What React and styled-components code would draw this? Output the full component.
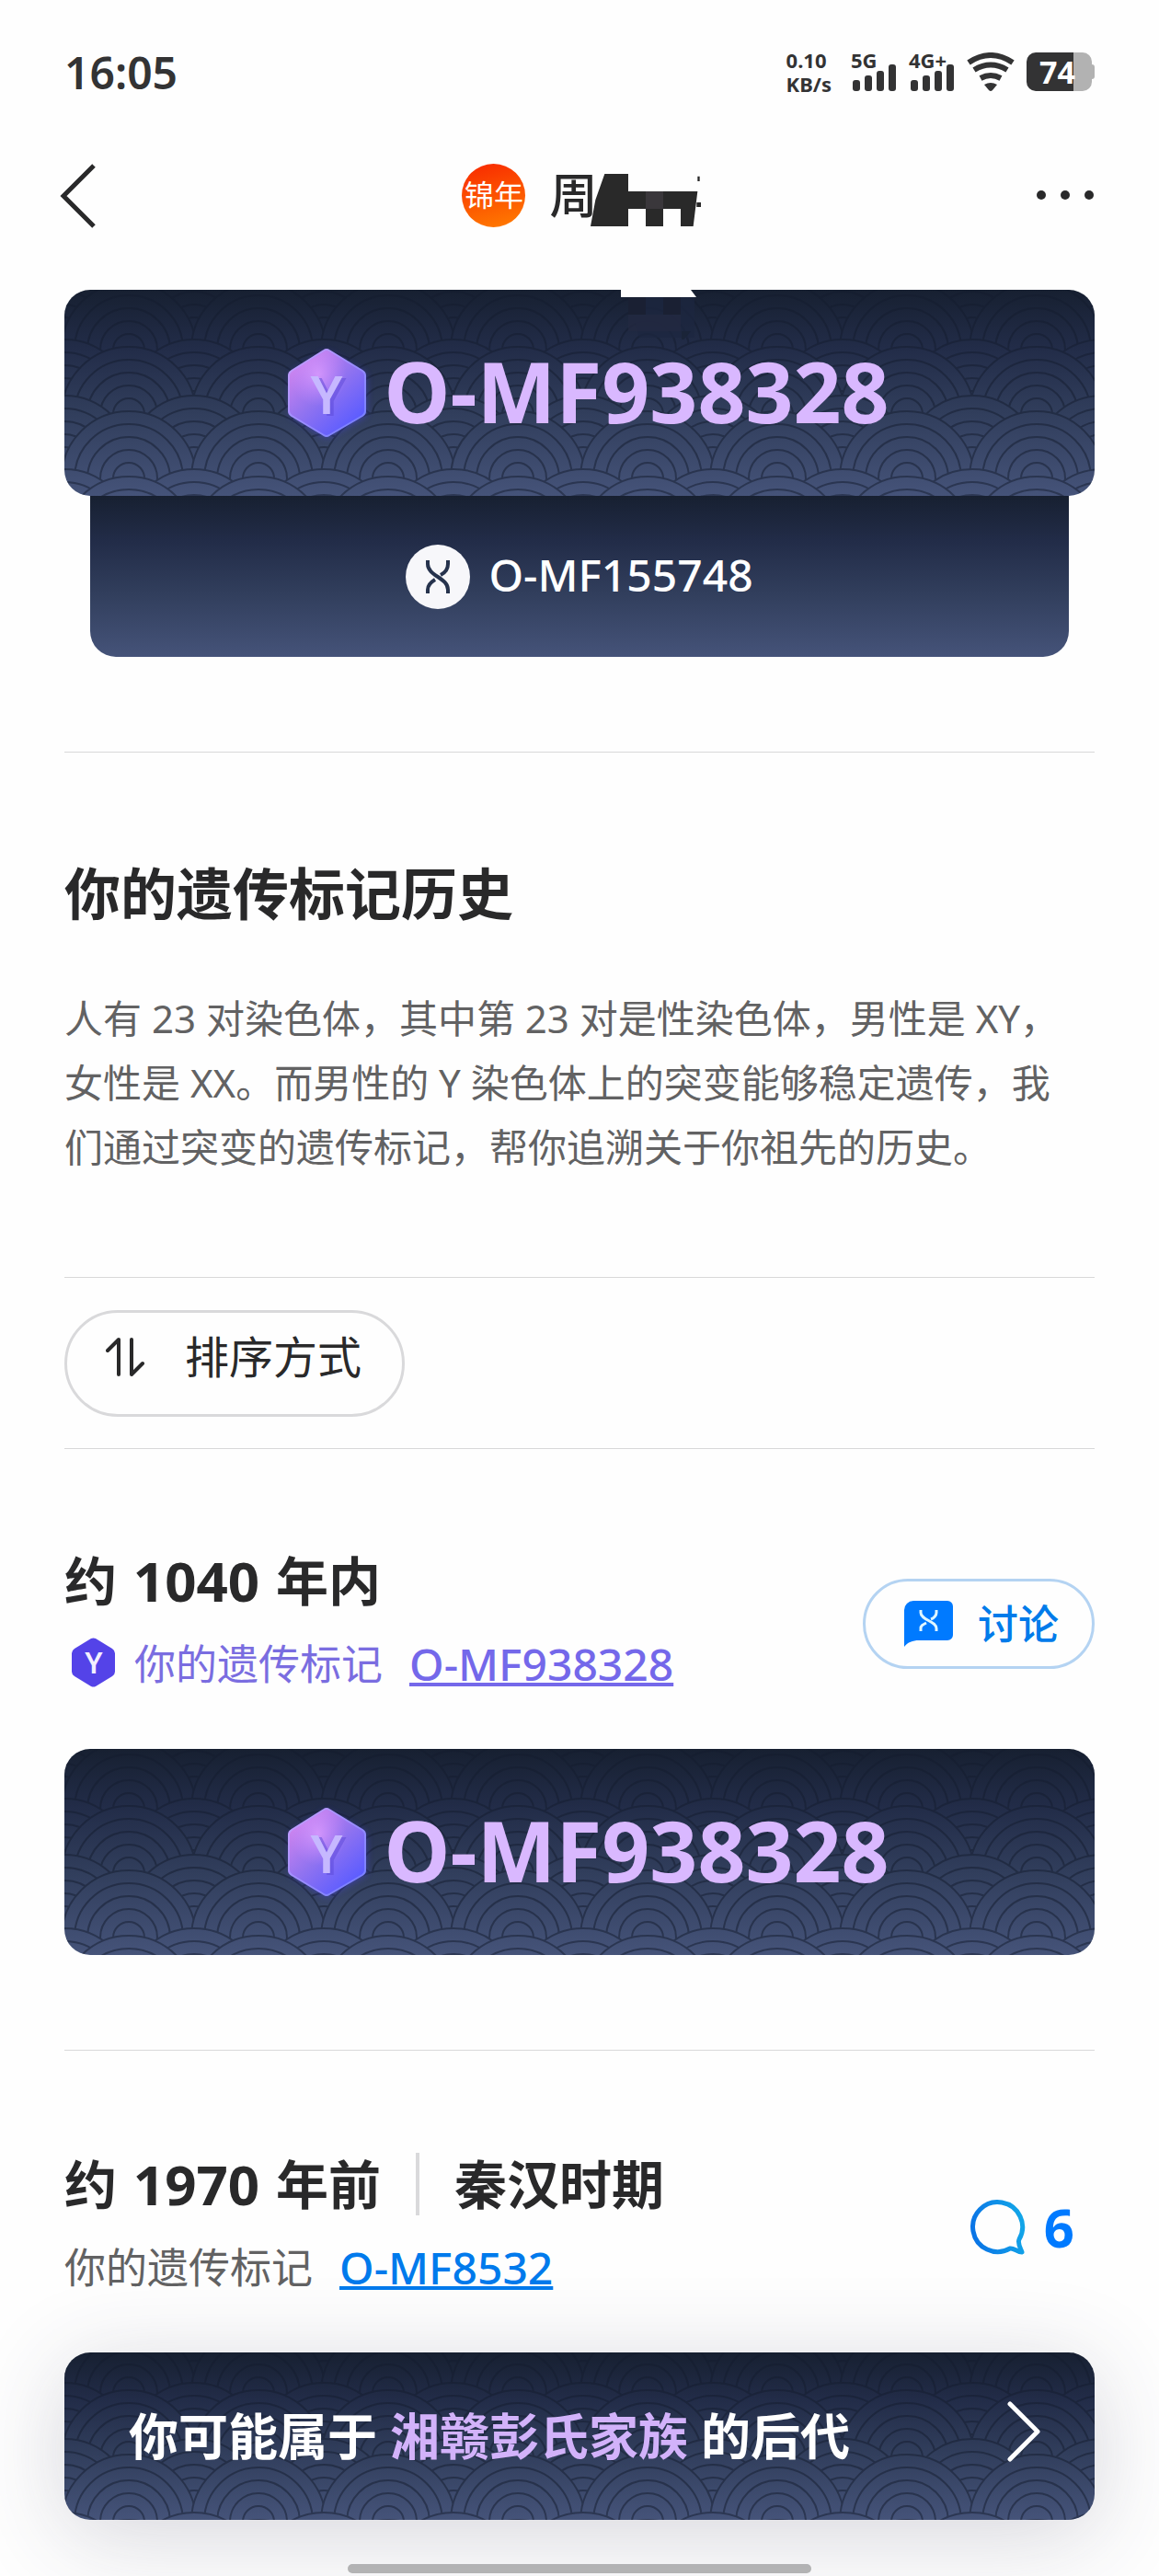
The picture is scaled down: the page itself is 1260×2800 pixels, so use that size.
import { useId } from "react";
import styled, { createGlobalStyle } from "styled-components";

const GlobalStyle = createGlobalStyle`
  * {
    box-sizing: border-box;
  }
  body {
    margin: 0;
    background: #fefefe;
    color: #29292a;
    font-family: "Noto Sans", "Noto Sans CJK SC", sans-serif;
  }
  button {
    font-family: inherit;
    color: inherit;
    background: none;
    border: none;
    padding: 0;
    cursor: pointer;
  }
  svg {
    display: block;
    flex-shrink: 0;
  }
`;

const Page = styled.div`
  padding: 0 70px 3px;
  overflow: hidden;
`;

const StatusBar = styled.div`
  display: flex;
  align-items: center;
  justify-content: space-between;
  height: 156px;
  color: #333334;
`;

const Clock = styled.span`
  font-size: 48px;
  font-weight: 600;
`;

const StatusIcons = styled.div`
  display: flex;
  align-items: center;
  gap: 13px;
`;

const NetSpeed = styled.div`
  display: flex;
  flex-direction: column;
  margin-right: 8px;
  font-size: 22px;
  line-height: 26px;
  font-weight: 700;
`;

const SignalBox = styled.div`
  position: relative;
  width: 50px;
  height: 42px;
`;

const SignalLabel = styled.span`
  position: absolute;
  top: -3px;
  left: 0;
  font-size: 22px;
  line-height: 22px;
  font-weight: 700;
`;

const BatteryBox = styled.div`
  position: relative;
  width: 74px;
  height: 42px;
`;

const BatteryLevel = styled.span`
  position: absolute;
  top: 0;
  right: 21px;
  font-size: 34px;
  line-height: 42px;
  font-weight: 700;
  color: #fff;
`;

const Header = styled.header`
  display: grid;
  grid-template-columns: 64px 1fr 60px;
  align-items: center;
  height: 112px;
  margin-bottom: 47px;
`;

const MoreButton = styled.button`
  justify-self: end;
`;

const Owner = styled.div`
  display: flex;
  align-items: center;
  justify-content: center;
`;

const Avatar = styled.span`
  display: flex;
  align-items: center;
  justify-content: center;
  width: 69px;
  height: 69px;
  margin-right: 26px;
  border-radius: 50%;
  background: linear-gradient(165deg, #f93000 10%, #ff7a00 95%);
  color: #fff;
  font-size: 32px;
  line-height: 40px;
`;

const OwnerName = styled.h1`
  display: flex;
  align-items: center;
  margin: 0;
  font-size: 52px;
  line-height: 70px;
  font-weight: 500;

  svg {
    margin: 10px 0 0 -8px;
  }
`;

const PatternCard = styled.div`
  position: relative;
  display: flex;
  align-items: center;
  justify-content: center;
  height: 224px;
  border-radius: 28px;
  overflow: hidden;
  background: linear-gradient(#172031, #222c48 28%, #313e5c 60%, #455379);
`;

const PatternSvg = styled.svg`
  position: absolute;
  inset: 0;
  width: 100%;
  height: 100%;
`;

const Smudge = styled.svg`
  position: absolute;
  top: 0;
  left: 54%;
`;

const CardLabel = styled.span`
  position: relative;
  display: flex;
  align-items: center;
  font-size: 91px;
  line-height: 120px;
  font-weight: 700;
  color: #d9b8ff;
`;

// keeps latin capitals and hanzi centred against the icon beside them
const Raised = styled.span`
  padding-bottom: 5px;
`;

const SubCard = styled.div`
  display: flex;
  align-items: center;
  justify-content: center;
  gap: 20px;
  height: 175px;
  margin: 0 28px;
  border-radius: 0 0 28px 28px;
  background: linear-gradient(#172031, #222c48 28%, #313e5c 60%, #455379);
  color: #fff;
  font-size: 48px;
  font-weight: 500;
`;

const Divider = styled.hr`
  height: 1px;
  margin: 0;
  border: none;
  background: #d8d8d9;
`;

const Block = styled.section`
  padding: ${({ $pad }) => $pad};
`;

const Heading = styled.h2`
  margin: 0 0 60px;
  font-size: 61px;
  line-height: 80px;
  font-weight: 700;
`;

const Intro = styled.p`
  margin: 0;
  padding-right: 20px;
  font-size: 42px;
  line-height: 70px;
  color: #626263;
`;

const SortButton = styled.button`
  display: flex;
  align-items: center;
  gap: 44px;
  height: 116px;
  padding: 0 44px 14px 42px;
  border: 3px solid #d9d9db;
  border-radius: 58px;
  font-size: 48px;
  line-height: 70px;
`;

const EraHead = styled.div`
  display: flex;
  align-items: center;
  justify-content: space-between;
  margin-bottom: 54px;
`;

const EraTitle = styled.h3`
  display: flex;
  align-items: center;
  margin: 0 0 18px;
  font-size: 57px;
  line-height: 70px;
  font-weight: 700;
  white-space: pre;
`;

const EraYears = styled.span`
  margin: 0 3px;
  font-size: 60px;
`;

const EraSplit = styled.span`
  width: 4px;
  height: 68px;
  margin: 0 38px;
  background: #d9d9db;
`;

const MarkerRow = styled.div`
  display: flex;
  align-items: center;
  font-size: 45px;
  line-height: 76px;
  color: ${({ $own }) => ($own ? "#7a6de0" : "#626263")};
`;

const MarkerLink = styled.a`
  margin-left: 29px;
  font-size: 48px;
  font-weight: 500;
  color: ${({ $own }) => ($own ? "#7468ea" : "#007aec")};
  text-decoration: underline;
  text-decoration-thickness: 4px;
  text-decoration-skip-ink: none;
  text-underline-offset: 2px;
`;

const DiscussButton = styled.button`
  display: flex;
  align-items: center;
  gap: 27px;
  height: 98px;
  padding: 0 36px 0 42px;
  border: 3px solid #b4d3f2;
  border-radius: 49px;
  color: #007bea;
  font-size: 44px;
  font-weight: 500;
`;

const CommentButton = styled.button`
  display: flex;
  align-items: center;
  gap: 20px;
  margin-right: 22px;
  color: #007aff;
  font-size: 58px;
  line-height: 64px;
  font-weight: 700;
`;

const Banner = styled.a`
  position: relative;
  display: flex;
  height: 182px;
  border-radius: 28px;
  box-shadow: 0 16px 100px rgba(50, 50, 80, 0.2);
  text-decoration: none;

  ${PatternCard} {
    flex: 1;
    height: auto;
    justify-content: space-between;
    padding: 0 58px 0 70px;
  }
`;

const BannerText = styled.span`
  position: relative;
  font-size: 54px;
  line-height: 80px;
  font-weight: 700;
  color: #fff;

  em {
    font-style: normal;
    color: #d2b2fa;
  }
`;

const BannerArrow = styled.svg`
  position: relative;
  margin-bottom: 10px;
`;

const HomeIndicator = styled.div`
  width: 45%;
  height: 10px;
  margin: 48px auto 0;
  border-radius: 5px;
  background: #b9b9b9;
`;

// tops of the scale rows, back to front; odd rows sit half a scale to the side
const waveRows = [
  { top: -26, x: 0 },
  { top: -8, x: 70 },
  { top: 54, x: 0 },
  { top: 62, x: 70 },
  { top: 115, x: 0 },
  { top: 132, x: 70 },
  { top: 195, x: 0 },
  { top: 203, x: 70 },
];
const rings = [73, 59, 45, 31, 17];

const Waves = () => {
  const id = useId();
  return (
    <PatternSvg viewBox="0 0 1120 224" preserveAspectRatio="xMidYMid slice" aria-hidden="true">
      <mask id={id} maskUnits="userSpaceOnUse" x="0" y="0" width="1120" height="224">
        <g fill="#000" stroke="#fff" strokeWidth="2">
          {waveRows.map((row) =>
            [0, 1, 2, 3, 4, 5, 6, 7, 8].map((col) =>
              rings.map((r) => (
                <circle
                  key={`${row.top}-${col}-${r}`}
                  cx={row.x + col * 141}
                  cy={row.top + 73}
                  r={r}
                />
              ))
            )
          )}
        </g>
      </mask>
      <rect width="1120" height="224" fill="#141c2e" opacity="0.5" mask={`url(#${id})`} />
    </PatternSvg>
  );
};

const GemBadge = () => {
  const id = useId();
  return (
    <svg width="124" height="120" viewBox="0 0 124 120" aria-hidden="true">
      <defs>
        <linearGradient id={`${id}f`} x1="0.15" y1="0.1" x2="0.8" y2="0.9">
          <stop offset="0" stopColor="#cf84ee" />
          <stop offset="0.5" stopColor="#9173f0" />
          <stop offset="1" stopColor="#5b5cff" />
        </linearGradient>
        <radialGradient id={`${id}h`} cx="0.38" cy="0.28" r="0.38">
          <stop offset="0" stopColor="#dc9cff" stopOpacity="0.8" />
          <stop offset="1" stopColor="#c98cff" stopOpacity="0" />
        </radialGradient>
        <linearGradient id={`${id}s`} x1="0" y1="0" x2="1" y2="1">
          <stop offset="0" stopColor="#c9a0ff" />
          <stop offset="1" stopColor="#6f7cff" />
        </linearGradient>
        <filter id={`${id}g`} x="-20%" y="-20%" width="140%" height="140%">
          <feGaussianBlur stdDeviation="4" />
        </filter>
      </defs>
      <path
        d="M62 16 L104 40 V84 L62 108 L24 84 V40Z"
        fill="#4a3fff"
        opacity="0.6"
        filter={`url(#${id}g)`}
      />
      <path
        d="M59 14 Q62 12 65 14 L101 36 Q104 38 104 41 V80 Q104 83 101 85 L65 106 Q62 108 59 106 L24 85 Q21 83 21 80 V41 Q21 38 24 36Z"
        fill={`url(#${id}f)`}
        stroke={`url(#${id}s)`}
        strokeWidth="2"
      />
      <path d="M62 14 L103 38 V83 L62 106 L22 83 V38Z" fill={`url(#${id}h)`} />
      <text x="66" y="85" textAnchor="middle" fontSize="58" fontWeight="600" fill="#5a48d8" opacity="0.5">
        Y
      </text>
      <text x="62" y="83" textAnchor="middle" fontSize="58" fontWeight="600" fill="#c6b8ff">
        Y
      </text>
    </svg>
  );
};

const StrandIcon = () => (
  <svg width="70" height="70" viewBox="0 0 70 70" aria-hidden="true">
    <circle cx="35" cy="35" r="35" fill="#f7f7fa" />
    <g fill="none" stroke="#26334d" strokeWidth="4">
      <path d="M24 17v4C24 34 46 36 46 49v4" />
      <path d="M46 17v4C46 27 42 31 38 33" />
      <path d="M32 38C27 41 24 44 24 49v4" />
    </g>
  </svg>
);

const DiscussIcon = () => (
  <svg width="53" height="50" viewBox="0 0 53 50" aria-hidden="true">
    <path
      d="M10 0H47a6 6 0 0 1 6 6V37a6 6 0 0 1-6 6H16C9 43 4 45 0 50V10A10 10 0 0 1 10 0Z"
      fill="#007aff"
    />
    <g fill="none" stroke="#dff6ff" strokeWidth="3">
      <path d="M18 10v3C18 21 35 22 35 30v3" />
      <path d="M35 10v3C35 16 32 19 29 20" />
      <path d="M24 24C20 26 18 27 18 30v3" />
    </g>
  </svg>
);

const HexIcon = () => (
  <svg width="76" height="58" viewBox="-8 0 76 58" aria-hidden="true">
    <path
      d="M21 1Q23.500 0 26 1L44 12Q47 14 47 17V37Q47 40 44 42L26 53Q23.500 54 21 53L3 42Q0 40 0 37V17Q0 14 3 12Z"
      fill="#5443e8"
    />
    <text x="24" y="39" textAnchor="middle" fontSize="32" fontWeight="600" fill="#f4f0ff">
      Y
    </text>
  </svg>
);

const Signal = ({ label }) => (
  <SignalBox>
    <SignalLabel>{label}</SignalLabel>
    <svg width="50" height="42" viewBox="0 0 50 42" fill="#333334" aria-hidden="true">
      <rect x="2" y="30" width="8" height="12" rx="3" />
      <rect x="15" y="25" width="8" height="17" rx="3" />
      <rect x="28" y="20" width="8" height="22" rx="3" />
      <rect x="41" y="13" width="8" height="29" rx="3" />
    </svg>
  </SignalBox>
);

const DarkCard = ({ code, children }) => (
  <PatternCard>
    <Waves />
    {children}
    <CardLabel>
      <GemBadge />
      <Raised>{code}</Raised>
    </CardLabel>
  </PatternCard>
);

const App = () => {
  return (
    <Page>
      <GlobalStyle />
      <StatusBar>
        <Clock>16:05</Clock>
        <StatusIcons>
          <NetSpeed>
            <span>0.10</span>
            <span>KB/s</span>
          </NetSpeed>
          <Signal label="5G" />
          <Signal label="4G+" />
          <svg width="52" height="42" viewBox="0 0 52 42" aria-hidden="true">
            <g fill="none" stroke="#333334" strokeWidth="6">
              <path d="M2 11Q26-5 50 11" />
              <path d="M8 19Q26 8 44 19" />
              <path d="M15 28Q26 22 37 28" />
            </g>
            <path d="M19 35Q26 31 33 35L28 41Q26 43 24 41Z" fill="#333334" />
          </svg>
          <BatteryBox>
            <svg width="74" height="42" viewBox="0 0 74 42" aria-hidden="true">
              <path
                d="M51 0H61a10 10 0 0 1 10 10V13Q74 13 74 16V26Q74 29 71 29V32a10 10 0 0 1-10 10H51Z"
                fill="#b2b2b2"
              />
              <path d="M51 0H10A10 10 0 0 0 0 10V32A10 10 0 0 0 10 42H51Z" fill="#333334" />
            </svg>
            <BatteryLevel>74</BatteryLevel>
          </BatteryBox>
        </StatusIcons>
      </StatusBar>

      <Header>
        <button type="button" aria-label="返回">
          <svg
            width="40"
            height="70"
            viewBox="5 0 40 70"
            overflow="visible"
            fill="none"
            stroke="#29292a"
            strokeWidth="5"
            aria-hidden="true"
          >
            <path d="M37 3L4 36L37 69" />
          </svg>
        </button>
        <Owner>
          <Avatar>锦年</Avatar>
          <OwnerName>
            周
            <svg width="120" height="57" viewBox="489 120 360 171" aria-hidden="true">
              <path
                d="M535 120H612V177H838L824 291H783V234H726V291H669V234H612V291H489L505 205Z"
                fill="#292929"
              />
              <path d="M669 177h57v57h-57z" fill="#3a373b" />
              <path d="M838 128h7v16h-7zM835 213h14v15h-14z" fill="#292929" />
            </svg>
          </OwnerName>
        </Owner>
        <MoreButton type="button" aria-label="更多">
          <svg width="64" height="12" viewBox="0 0 64 12" fill="#29292a" aria-hidden="true">
            <circle cx="6" cy="6" r="5" />
            <circle cx="32" cy="6" r="5" />
            <circle cx="58" cy="6" r="5" />
          </svg>
        </MoreButton>
      </Header>

      <DarkCard code="O-MF938328">
        <Smudge width="90" height="54" viewBox="0 0 90 54" aria-hidden="true">
          <path d="M8 8H80V52H20Z" fill="#1d2640" opacity="0.7" />
          <path d="M8 8h19v19h-19zM46 8h19v19h-19z" fill="#1a2033" />
          <path d="M8 27h57v18h-57z" fill="#242a42" opacity="0.7" />
          <path d="M66 45h10l-10 12z" fill="#1a2438" />
          <path d="M0 0H76L82 8H0Z" fill="#fefefe" />
        </Smudge>
      </DarkCard>
      <SubCard>
        <StrandIcon />
        <Raised>O-MF155748</Raised>
      </SubCard>

      <Block $pad="103px 0 0">
        <Divider />
      </Block>
      <Block $pad="114px 0 106px">
        <Heading>你的遗传标记历史</Heading>
        <Intro>
          人有 23 对染色体，其中第 23 对是性染色体，男性是 XY，女性是 XX。而男性的 Y
          染色体上的突变能够稳定遗传，我们通过突变的遗传标记，帮你追溯关于你祖先的历史。
        </Intro>
      </Block>

      <Divider />
      <Block $pad="35px 0 34px">
        <SortButton type="button">
          <svg
            width="42"
            height="44"
            viewBox="0 0 42 44"
            fill="none"
            stroke="#29292a"
            strokeWidth="4"
            strokeLinecap="round"
            strokeLinejoin="round"
            aria-hidden="true"
          >
            <path d="M2 15L14 3V41" />
            <path d="M28 3V41L40 29" />
          </svg>
          排序方式
        </SortButton>
      </Block>
      <Divider />

      <Block $pad="108px 0 103px">
        <EraHead>
          <div>
            <EraTitle>
              {"约 "}
              <EraYears>1040</EraYears>
              {" 年内"}
            </EraTitle>
            <MarkerRow $own>
              <HexIcon />
              你的遗传标记
              <MarkerLink $own href="#O-MF938328">
                O-MF938328
              </MarkerLink>
            </MarkerRow>
          </div>
          <DiscussButton type="button">
            <DiscussIcon />
            <Raised>讨论</Raised>
          </DiscussButton>
        </EraHead>
        <DarkCard code="O-MF938328" />
      </Block>
      <Divider />

      <Block $pad="110px 0 0">
        <EraHead>
          <div>
            <EraTitle>
              {"约 "}
              <EraYears>1970</EraYears>
              {" 年前"}
              <EraSplit />
              秦汉时期
            </EraTitle>
            <MarkerRow>
              你的遗传标记
              <MarkerLink href="#O-MF8532">O-MF8532</MarkerLink>
            </MarkerRow>
          </div>
          <CommentButton type="button">
            <svg width="60" height="60" viewBox="0 0 60 60" fill="none" aria-hidden="true">
              <defs>
                <linearGradient id="bubble" x1="0" y1="0.6" x2="1" y2="0.4">
                  <stop offset="0" stopColor="#0a74e6" />
                  <stop offset="1" stopColor="#12a5e8" />
                </linearGradient>
              </defs>
              <path
                d="M43 53A27 27 0 1 1 53 43C51 47 54 52 56 57C51 57 47 52 43 53Z"
                stroke="url(#bubble)"
                strokeWidth="5"
                strokeLinejoin="round"
              />
            </svg>
            6
          </CommentButton>
        </EraHead>
      </Block>

      <Banner href="#family">
        <PatternCard>
          <Waves />
          <BannerText>
            你可能属于 <em>湘赣彭氏家族</em> 的后代
          </BannerText>
          <BannerArrow
            width="38"
            height="66"
            viewBox="0 0 38 66"
            fill="none"
            stroke="#fff"
            strokeWidth="5"
            strokeLinecap="round"
            strokeLinejoin="round"
            aria-hidden="true"
          >
            <path d="M4 3L34 33L4 63" />
          </BannerArrow>
        </PatternCard>
      </Banner>
      <HomeIndicator />
    </Page>
  );
};

export default App;
